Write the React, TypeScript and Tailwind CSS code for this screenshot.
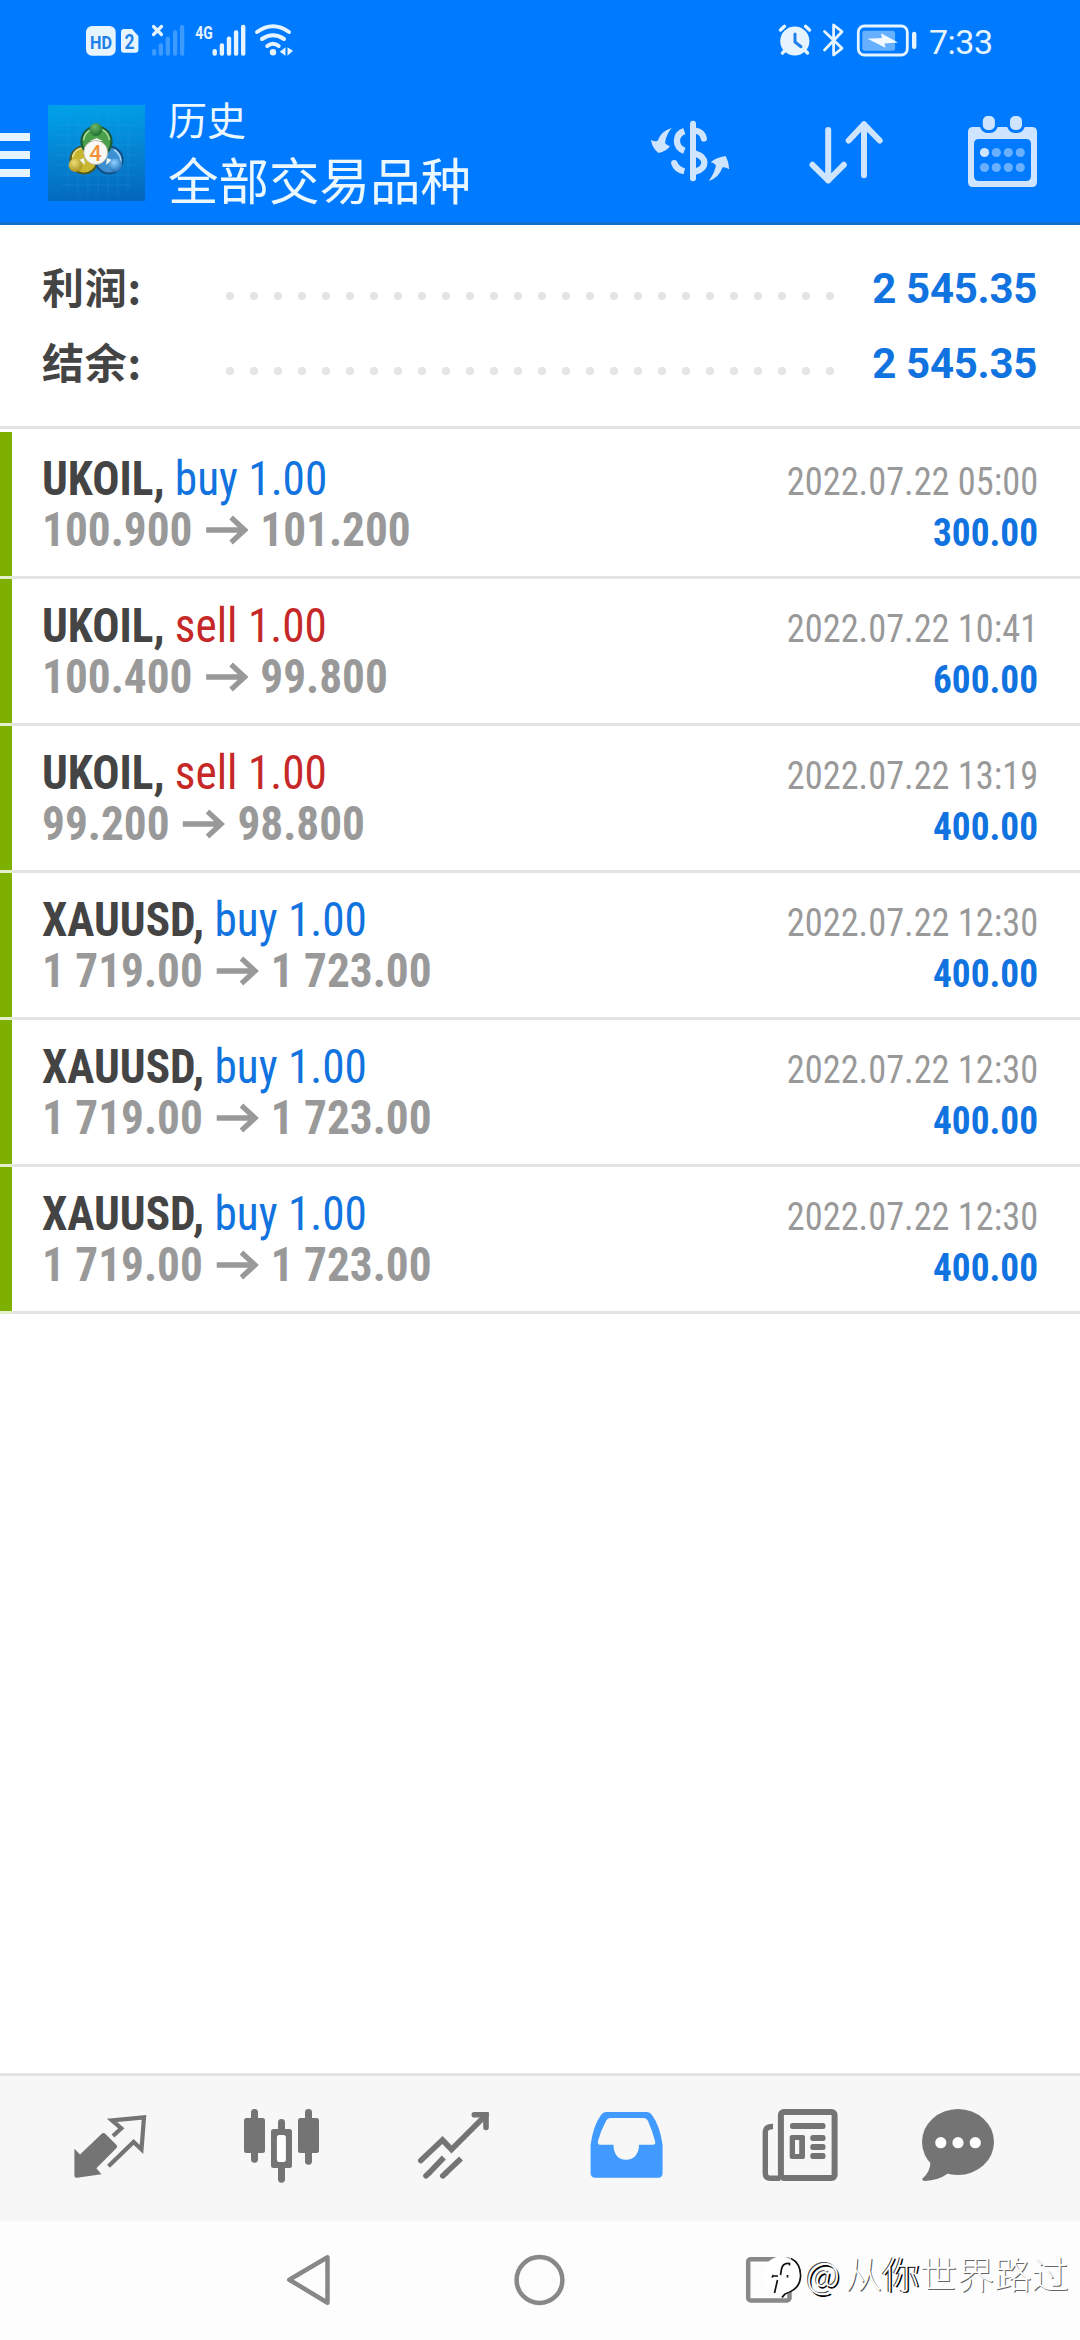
import React from "react";

interface Deal {
	symbol: string;
	side: "buy" | "sell";
	volume: string;
	open: string;
	close: string;
	time: string;
	profit: string;
}

const deals: Deal[] = [
	{ symbol: "UKOIL", side: "buy", volume: "1.00", open: "100.900", close: "101.200", time: "2022.07.22 05:00", profit: "300.00" },
	{ symbol: "UKOIL", side: "sell", volume: "1.00", open: "100.400", close: "99.800", time: "2022.07.22 10:41", profit: "600.00" },
	{ symbol: "UKOIL", side: "sell", volume: "1.00", open: "99.200", close: "98.800", time: "2022.07.22 13:19", profit: "400.00" },
	{ symbol: "XAUUSD", side: "buy", volume: "1.00", open: "1 719.00", close: "1 723.00", time: "2022.07.22 12:30", profit: "400.00" },
	{ symbol: "XAUUSD", side: "buy", volume: "1.00", open: "1 719.00", close: "1 723.00", time: "2022.07.22 12:30", profit: "400.00" },
	{ symbol: "XAUUSD", side: "buy", volume: "1.00", open: "1 719.00", close: "1 723.00", time: "2022.07.22 12:30", profit: "400.00" },
];

const StatusLeft: React.FC = () => (
	<svg width="220" height="81" viewBox="80 0 220 81" fill="#e6f4ff">
		<rect x="86" y="26" width="29.7" height="29.7" rx="6" />
		<text x="101" y="48.5" fontSize="19" fontWeight="700" textAnchor="middle" textLength="22" lengthAdjust="spacingAndGlyphs" fill="#1f7fe8" className="font-['Roboto',sans-serif]">HD</text>
		<path d="M124 29 H132 L138.4 36 V49.7 Q138.4 52.7 135.4 52.7 H124 Q121 52.7 121 49.7 V32 Q121 29 124 29 Z" />
		<text x="129.6" y="49.3" fontSize="21" fontWeight="700" textAnchor="middle" textLength="10" lengthAdjust="spacingAndGlyphs" fill="#1f7fe8" className="font-['Roboto',sans-serif]">2</text>
		<path d="M153.5 26.5 L161.5 34.5 M161.5 26.5 L153.5 34.5" stroke="#e6f4ff" strokeWidth="3.2" strokeLinecap="round" />
		{/* first SIM has no service */}
		<g fill="#3d9bff">
			<rect x="152" y="49" width="4.3" height="6.7" rx="2" />
			<rect x="158.7" y="43.3" width="4.3" height="12.4" rx="2" />
			<rect x="165.7" y="36.5" width="4.3" height="19.2" rx="2" />
			<rect x="173" y="30.2" width="4.3" height="25.5" rx="2" />
			<rect x="180" y="25" width="4.3" height="30.7" rx="2" />
		</g>
		<text x="195.3" y="38.5" fontSize="19" fontWeight="700" textLength="17.5" lengthAdjust="spacingAndGlyphs" className="font-['Roboto',sans-serif]">4G</text>
		<rect x="212.5" y="49" width="4.4" height="6.7" rx="2" />
		<rect x="219.7" y="43.3" width="4.4" height="12.4" rx="2" />
		<rect x="226.8" y="36.5" width="4.4" height="19.2" rx="2" />
		<rect x="233.9" y="30.2" width="4.4" height="25.5" rx="2" />
		<rect x="241" y="24.7" width="4.4" height="31" rx="2" />
		<g fill="none" stroke="#e6f4ff" strokeWidth="4" strokeLinecap="round">
			<path d="M257 32 Q273 20.5 289 32" />
			<path d="M262 39 Q273 31.5 284 39" />
			<path d="M267.3 46 Q273 41.5 278.7 46" />
		</g>
		<circle cx="273" cy="52.3" r="3.2" />
		<path d="M285.5 47.3 V55.7 L279.8 51.8 Z M287.5 47.3 L293 50.8 L287.5 55.7 Z" />
	</svg>
);

const StatusRight: React.FC = () => (
	<svg width="150" height="81" viewBox="772 0 150 81" fill="none" stroke="#e6f4ff" strokeLinecap="round">
		<circle cx="794.8" cy="41" r="14.6" fill="#e6f4ff" stroke="none" />
		<path d="M780.5 30 L784.5 26.3 M805.5 26.3 L809.5 30 M782.5 53 L786 49.5 M807.5 53 L804 49.5" strokeWidth="3.4" />
		<path d="M795 34 V42 L801 46.7" stroke="#1f7fe8" strokeWidth="3" strokeLinejoin="round" />
		<path d="M824.5 31.5 L842 48.3 L833.6 55 V25 L842 31.7 L824.5 50" strokeWidth="2.8" strokeLinejoin="round" />
		<rect x="858.3" y="26" width="49" height="29" rx="6" strokeWidth="2.8" />
		<rect x="862.3" y="30.7" width="32.8" height="20" rx="2.5" fill="#66b0ff" stroke="none" />
		<path d="M867.5 38.8 L882 38 L881 33.3 L898 42.5 L884.5 43.5 L885.5 47.7 Z" fill="#f2faff" stroke="none" />
		<rect x="912" y="31.7" width="4.4" height="17.3" rx="2" fill="#e6f4ff" stroke="none" />
	</svg>
);

const Logo: React.FC = () => (
	<svg width="97" height="96" viewBox="48 105 97 96">
		<defs>
			<linearGradient id="tile" x1="0.5" y1="0" x2="0.6" y2="1">
				<stop offset="0" stopColor="#00a0e8" />
				<stop offset="0.5" stopColor="#0584d2" />
				<stop offset="1" stopColor="#0367bd" />
			</linearGradient>
			<radialGradient id="greenBall" cx="0.4" cy="0.3" r="0.8">
				<stop offset="0" stopColor="#6fb868" />
				<stop offset="1" stopColor="#12652b" />
			</radialGradient>
			<radialGradient id="yellowBall" cx="0.4" cy="0.3" r="0.8">
				<stop offset="0" stopColor="#efe07a" />
				<stop offset="1" stopColor="#9c8410" />
			</radialGradient>
			<radialGradient id="blueBall" cx="0.4" cy="0.3" r="0.8">
				<stop offset="0" stopColor="#8fd0ff" />
				<stop offset="1" stopColor="#0f62ad" />
			</radialGradient>
		</defs>
		<rect x="48" y="105" width="97" height="96" fill="url(#tile)" />
		<path d="M68 115V191M78 109V197M88 109V197M98 109V197M108 109V197M118 109V197M128 115V191M54 125H139M54 135H139M54 145H139M54 155H139M54 165H139M58 175H135M62 185H131" stroke="#3fb4ee" strokeOpacity="0.16" />
		{/* three interlocked figures */}
		<circle cx="84" cy="160" r="13.5" fill="#c9b62f" stroke="#4f5a22" strokeWidth="2.2" />
		<path d="M72.5 157 Q74 149.5 82 148" stroke="#f3eb9a" strokeWidth="1.6" fill="none" />
		<circle cx="109" cy="160" r="13.5" fill="#3c8fd0" stroke="#134f85" strokeWidth="2.2" />
		<path d="M120.5 165 Q122.5 155 114 149.5" stroke="#a5d8ff" strokeWidth="1.6" fill="none" />
		<circle cx="96.5" cy="141.5" r="15" fill="#4a9f4b" stroke="#1b5c3b" strokeWidth="2.2" />
		<path d="M83.5 140 Q85 132 91 129.5 M109.5 140 Q108 132 102 129.5" stroke="#a6dd97" strokeWidth="1.6" fill="none" />
		<path d="M90 141 L96.5 138 L103 141 Z M79 160 L84 158 L85 165 Z M107 158 L112 160 L106 165 Z" fill="#eef5ee" />
		<circle cx="96" cy="129.5" r="6.5" fill="url(#greenBall)" />
		<circle cx="75.5" cy="165.3" r="6.8" fill="url(#yellowBall)" />
		<circle cx="115.5" cy="165.3" r="6.8" fill="url(#blueBall)" />
		<circle cx="95.7" cy="152.5" r="12" fill="#f8f8f4" stroke="#b9b29a" strokeWidth="0.8" />
		<text x="95.5" y="160.5" fontSize="22" fontWeight="500" textAnchor="middle" fill="#f2913c" className="font-['Roboto',sans-serif]">4</text>
	</svg>
);

const CurrencyIcon: React.FC = () => (
	<svg width="100" height="84" viewBox="640 109 100 84" fill="none" stroke="#cfe4ff" strokeWidth="6.3">
		<path d="M693 123.7 V178.3" strokeLinecap="round" strokeWidth="6" />
		<path d="M684.3 131 C674.5 134.5 674.5 147 684.3 150.8" />
		<path d="M684.3 171.3 C679 170 675.5 167 674.3 163" />
		<circle cx="674.2" cy="163" r="3.1" fill="#cfe4ff" stroke="none" />
		<path d="M695 130.5 C700.5 131.5 703.2 134.5 703.8 138.5" strokeLinecap="round" />
		<path d="M695 153.5 C707.5 157.5 707.5 168 695 171.8" />
		<g fill="#cfe4ff" stroke="none">
			<path d="M651 139.7 Q654 142 657.5 141 Q661 131 671.6 128 Q666 135 665 143 Q667 145.5 670 146.3 Q666 151.5 658.5 153 Q652 148 651 139.7 Z" />
			<path d="M710.8 162.3 Q716 157.5 725.5 156 Q729 162 729 169.3 Q726 167 722.5 167.3 Q719 178 708.7 181 Q714 174 716 165.5 Q714 162.8 710.8 162.3 Z" />
		</g>
	</svg>
);

const SortIcon: React.FC = () => (
	<svg width="84" height="84" viewBox="804 109 84 84" fill="none" stroke="#cfe4ff" strokeWidth="6" strokeLinecap="round" strokeLinejoin="round">
		<path d="M828.2 130 V180.5 M812.5 164.8 L828.2 180.5 L843.8 164.8" />
		<path d="M864 175.3 V124.3 M848.7 140.5 L864 124.3 L879.7 140.5" />
	</svg>
);

const CalendarIcon: React.FC = () => (
	<svg width="80" height="84" viewBox="962 109 80 84" fill="#cfe4ff">
		<path fillRule="evenodd" d="M973 127 H1032 Q1037 127 1037 132 V182 Q1037 187 1032 187 H973 Q968 187 968 182 V132 Q968 127 973 127 Z M979 139 Q974 139 974 144 V176 Q974 181 979 181 H1026 Q1031 181 1031 176 V144 Q1031 139 1026 139 Z" />
		<rect x="981.3" y="114.5" width="15.1" height="17" rx="6.5" stroke="#007aff" strokeWidth="3" />
		<rect x="1008.5" y="114.5" width="15" height="17" rx="6.5" stroke="#007aff" strokeWidth="3" />
		<circle cx="984.5" cy="152.5" r="4.6" />
		<g fill="#68b0ff">
			<circle cx="996.3" cy="152.5" r="4.6" />
			<circle cx="1008.3" cy="152.5" r="4.6" />
			<circle cx="1020.3" cy="152.5" r="4.6" />
			<circle cx="984.5" cy="167.5" r="4.6" />
			<circle cx="996.3" cy="167.5" r="4.6" />
			<circle cx="1008.3" cy="167.5" r="4.6" />
			<circle cx="1020.3" cy="167.5" r="4.6" />
		</g>
	</svg>
);

const Header: React.FC = () => (
	<header className="h-[225px] bg-[#007aff] border-b-[3px] border-[#126fd0]">
		<div className="flex h-[81px] items-center justify-between pl-20 pr-[87px]">
			<StatusLeft />
			<div className="flex items-center">
				<StatusRight />
				<span className="ml-1.5 mt-0.5 w-[65px] pl-px text-[34px] leading-none tracking-[-0.5px] text-[#e6f4ff] font-['Roboto',sans-serif]">
					7:33
				</span>
			</div>
		</div>
		<div className="flex h-[141px] items-start">
			<div className="mt-[52px] flex w-[30px] flex-col gap-2.5">
				<span className="h-2 bg-[#e6f4ff]" />
				<span className="h-2 bg-[#e6f4ff]" />
				<span className="h-2 bg-[#e6f4ff]" />
			</div>
			<div className="ml-[18px] mt-6">
				<Logo />
			</div>
			<div className="ml-[23px] mt-[15px] flex flex-col text-[#ecf8ff] font-['Noto_Sans_CJK_SC',sans-serif]">
				<span className="text-[39px] leading-[44px]">历史</span>
				<span className="mt-2 text-[50.5px] leading-[60px]">全部交易品种</span>
			</div>
			<div className="ml-auto mr-[38px] mt-7 flex">
				<CurrencyIcon />
				<div className="ml-16">
					<SortIcon />
				</div>
				<div className="ml-[74px]">
					<CalendarIcon />
				</div>
			</div>
		</div>
	</header>
);

const SummaryRow: React.FC<{ label: string; value: string }> = ({ label, value }) => (
	<div className="flex h-[75px] items-center pl-[42px] pr-[43px] text-[42px] font-bold leading-none">
		<span className="-mt-[5px] w-[184px] tracking-[0.8px] text-[#444] font-['Noto_Sans_CJK_SC',sans-serif]">{label}</span>
		<div className="mt-[15px] flex w-[608px] justify-between">
			{Array.from({ length: 26 }, (_, i) => (
				<span key={i} className="size-2 rounded-full bg-[#e4e4e4]" />
			))}
		</div>
		<span className="ml-auto tracking-[-0.3px] text-[#1173e0] font-['Roboto',sans-serif]">{value}</span>
	</div>
);

const PriceArrow: React.FC = () => (
	<svg width="45" height="30" viewBox="0 0 45 30" className="ml-3.5 mr-[13px]" fill="none" stroke="#999" strokeWidth="5.6">
		<path d="M0 15 H41 M26.5 2.5 L40.8 15 L26.5 27.5" />
	</svg>
);

const DealRow: React.FC<{ deal: Deal }> = ({ deal }) => (
	<div className="flex h-[147px] font-['Roboto_Condensed','Roboto',sans-serif] [font-stretch:75%]">
		<div className="w-3 border-b-[3px] border-[#e3efcd] bg-[#7db000]" />
		<div className="flex grow justify-between border-b-[3px] border-[#e4e4e4] pl-[30px] pr-[42px] pt-[21px]">
			<div className="origin-left scale-x-[0.943] text-[48px] leading-[51px]">
				<p>
					<span className="font-bold text-[#444]">{deal.symbol},</span>{" "}
					<span className={deal.side === "buy" ? "text-[#1173e0]" : "text-[#c62828]"}>
						{deal.side} {deal.volume}
					</span>
				</p>
				<div className="flex h-[51px] items-center font-bold text-[#999]">
					<span>{deal.open}</span>
					<PriceArrow />
					<span>{deal.close}</span>
				</div>
			</div>
			<div className="pt-[3px] text-right text-[39.5px] leading-[51px]">
				<p className="origin-right scale-x-[0.92] text-[#999]">{deal.time}</p>
				<p className="origin-right scale-x-[0.945] font-bold text-[#1173e0]">{deal.profit}</p>
			</div>
		</div>
	</div>
);

const TabBar: React.FC = () => (
	<nav className="flex h-[148px] border-t-[3px] border-[#e4e4e4] bg-[#f7f7f7] px-6">
		{/* Quotes */}
		<svg width="172" height="145" viewBox="24 2076 172 145" fill="#747474">
			<path d="M74.4 2148.7 L80 2154.5 L102 2133.5 Q103.5 2132.3 105 2133.5 L116.5 2145 Q117.8 2146.5 116.5 2148 L96.4 2168.3 L101.5 2174.3 L77 2177.7 Q74.4 2178 74.4 2175.5 Z" />
			<path d="M113 2136 L121.3 2128.3 L112 2120.3 L144 2117.3 L141.5 2149.5 L133.6 2142 L108.5 2166.2" fill="none" stroke="#747474" strokeWidth="4.2" />
		</svg>
		{/* Charts */}
		<svg width="172" height="145" viewBox="196 2076 172 145" fill="#747474">
			<rect x="251" y="2109" width="7" height="53.7" rx="3.4" />
			<rect x="244" y="2118" width="21" height="35" rx="2.5" />
			<rect x="278" y="2119" width="7" height="63.7" rx="3.4" />
			<rect x="271" y="2129" width="21" height="39" rx="2.5" />
			<rect x="276.9" y="2135" width="9" height="27" rx="2.5" fill="#fff" />
			<rect x="305" y="2109" width="7" height="55.7" rx="3.4" />
			<rect x="298" y="2118" width="21" height="35" rx="2.5" />
		</svg>
		{/* Trade */}
		<svg width="172" height="145" viewBox="368 2076 172 145" fill="none" stroke="#747474" strokeWidth="5.6">
			<path d="M420.8 2160.5 L442.5 2140 L451.5 2149.5 L486 2115" strokeLinecap="round" />
			<path d="M474.3 2114.8 H486 V2127.5" strokeLinecap="round" />
			<path d="M428.5 2173.7 L443.8 2157.5 M445 2173.7 L461 2158.5" />
			<path d="M426 2175.8 L429 2173 M442.8 2175.8 L446 2173" strokeLinecap="round" />
		</svg>
		{/* History */}
		<svg width="172" height="145" viewBox="540 2076 172 145" fill="#419aff">
			<path fillRule="evenodd" d="M606 2112 H647 Q650 2112 652 2115 Q660 2126 662.6 2145 V2173 Q662.6 2177.7 658 2177.7 H595.5 Q590.6 2177.7 590.6 2173 V2145 Q593 2126 601 2115 Q603 2112 606 2112 Z M610.5 2118 Q607.5 2118 606 2121 Q601 2130 598 2141 Q597.3 2144.7 600 2144.7 H613.5 C613.5 2154 618 2159.7 626 2159.7 C634 2159.7 639 2154 639 2144.7 H652.5 Q656.3 2144.7 655 2141 Q652 2130 648 2121 Q646.5 2118 643.5 2118 Z" />
		</svg>
		{/* News */}
		<svg width="172" height="145" viewBox="712 2076 172 145" fill="#747474">
			<rect x="780.9" y="2112" width="53.7" height="66" rx="3" fill="none" stroke="#747474" strokeWidth="6" />
			<path d="M773 2126.5 Q765.3 2126.5 765.3 2132 V2173 Q765.3 2178.3 770.5 2178.3 H780" fill="none" stroke="#747474" strokeWidth="5.4" />
			<rect x="790" y="2123" width="35.5" height="6" rx="2.5" />
			<path fillRule="evenodd" d="M792 2135 H803 Q805 2135 805 2137 V2157 Q805 2159 803 2159 H792 Q789.7 2159 789.7 2157 V2137 Q789.7 2135 792 2135 Z M795 2140 V2154 H799.2 V2140 Z" />
			<rect x="810.3" y="2135" width="15.2" height="6" rx="2.5" />
			<rect x="810.3" y="2144" width="15.2" height="6" rx="2.5" />
			<rect x="810.3" y="2153" width="15.2" height="6" rx="2.5" />
		</svg>
		{/* Messages */}
		<svg width="172" height="145" viewBox="884 2076 172 145" fill="#747474">
			<ellipse cx="958" cy="2142" rx="36" ry="33" />
			<path d="M930.5 2161 Q930.5 2172 922.5 2178.5 Q921.5 2180.8 925 2181 Q938 2180.5 948 2173.5 Z" />
			<g fill="#fff">
				<circle cx="940.8" cy="2142.7" r="5.6" />
				<circle cx="958" cy="2142.7" r="5.6" />
				<circle cx="975.3" cy="2142.7" r="5.6" />
			</g>
		</svg>
	</nav>
);

const Watermark: React.FC = () => (
	<div className="absolute bottom-[41px] left-[762px] flex items-center text-[37.3px] leading-[46px] text-white font-['Noto_Sans_CJK_SC',sans-serif]">
		<svg width="42" height="46" viewBox="762 2257 42 46">
			<path d="M791 2262.5 Q800.5 2267 800.5 2280 Q800 2292 789 2296 Q785 2297 782 2301.5" fill="none" stroke="#111" strokeWidth="1.8" />
			<circle cx="781" cy="2279" r="18.5" fill="#fff" />
			<path d="M789.5 2269.5 V2267.5 Q783 2266.5 781.5 2273 L780.5 2279 M773 2280 H778 M777.5 2284 L774.5 2297 M772 2281.5 L773.5 2279 M787.5 2279 V2281.5" fill="none" stroke="#111" strokeWidth="1.7" />
		</svg>
		<div className="-mt-1.5 flex font-light">
			<span className="w-[41px] pl-0.5 [text-shadow:-1px_-1px_0_#555,1.5px_1.5px_0_#000]">@</span>
			<span className="[text-shadow:1px_1px_0_#555]">从</span>
			<span className="[text-shadow:-1px_0_0_#222,1.5px_1px_0_#000]">你</span>
			<span className="[text-shadow:1px_1px_0_#666]">世界路过</span>
		</div>
	</div>
);

const SystemNav: React.FC = () => (
	<div className="relative h-[119px] bg-[#fdfdfd]">
		<div className="flex items-center justify-between pl-[284px] pr-[285px] pt-[31px]">
			<svg width="50" height="56" viewBox="284 2252 50 56" fill="none" stroke="#888" strokeWidth="4.5" strokeLinejoin="round">
				<path d="M289.3 2279.7 L327.5 2257.3 V2302.7 Z" />
			</svg>
			<svg width="56" height="56" viewBox="512 2252 56 56" fill="none" stroke="#888" strokeWidth="4.5">
				<circle cx="541.5" cy="2280" r="22.9" />
			</svg>
			<svg width="54" height="56" viewBox="741 2252 54 56" fill="none" stroke="#888" strokeWidth="4.5">
				<rect x="748.2" y="2259.2" width="41.3" height="41.3" rx="2.5" />
			</svg>
		</div>
		<Watermark />
	</div>
);

export default function App() {
	return (
		<div className="flex h-[2340px] w-[1080px] flex-col bg-white">
			<Header />
			<section className="h-[204px] border-b-[3px] border-[#e4e4e4] pt-[26px]">
				<SummaryRow label="利润:" value="2 545.35" />
				<SummaryRow label="结余:" value="2 545.35" />
			</section>
			<main className="grow pt-[3px]">
				{deals.map((deal, i) => (
					<DealRow key={i} deal={deal} />
				))}
			</main>
			<TabBar />
			<SystemNav />
		</div>
	);
}
